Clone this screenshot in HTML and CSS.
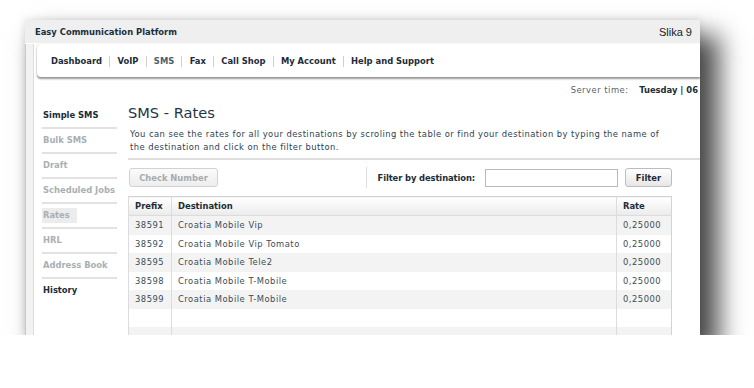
FILE: index.html
```html
<!DOCTYPE html>
<html lang="en">
  <head>
    <meta charset="UTF-8" />
    <meta name="viewport" content="width=device-width, initial-scale=1.0" />
    <title>Easy Communication Platform - SMS Rates</title>
    <link rel="stylesheet" href="styles.css">
  </head>
  <body>
    <div class="window">
      <div class="titlebar">
        <span class="app-name">Easy Communication Platform</span>
        <span class="caption">Slika 9</span>
      </div>

      <div class="shell">
        <div class="page">
          <!-- top menu -->
          <ul class="topnav">
            <li>Dashboard</li>
            <li>VoIP</li>
            <li class="current">SMS</li>
            <li>Fax</li>
            <li>Call Shop</li>
            <li>My Account</li>
            <li>Help and Support</li>
          </ul>

          <div class="server-time">
            <span class="label">Server time:</span>
            <strong>Tuesday | 06</strong>
          </div>

          <div class="content">
            <ul class="sidenav">
              <li class="on">Simple SMS</li>
              <li>Bulk SMS</li>
              <li>Draft</li>
              <li>Scheduled Jobs</li>
              <li><span class="selected">Rates</span></li>
              <li>HRL</li>
              <li>Address Book</li>
              <li class="on">History</li>
            </ul>

            <div class="main">
              <h1>SMS - Rates</h1>
              <p class="intro">
                You can see the rates for all your destinations by scroling the table or find your destination by typing the name of
                the destination and click on the filter button.
              </p>

              <div class="toolbar">
                <button class="button" disabled>Check Number</button>
                <div class="filter">
                  <label for="filter-destination">Filter by destination:</label>
                  <input type="text" id="filter-destination" />
                  <button class="button">Filter</button>
                </div>
              </div>

              <table class="rates">
                <thead>
                  <tr>
                    <th class="col-prefix">Prefix</th>
                    <th>Destination</th>
                    <th class="col-rate">Rate</th>
                  </tr>
                </thead>
                <tbody>
                  <tr><td>38591</td><td>Croatia Mobile Vip</td><td>0,25000</td></tr>
                  <tr><td>38592</td><td>Croatia Mobile Vip Tomato</td><td>0,25000</td></tr>
                  <tr><td>38595</td><td>Croatia Mobile Tele2</td><td>0,25000</td></tr>
                  <tr><td>38598</td><td>Croatia Mobile T-Mobile</td><td>0,25000</td></tr>
                  <tr><td>38599</td><td>Croatia Mobile T-Mobile</td><td>0,25000</td></tr>
                  <tr><td></td><td></td><td></td></tr>
                  <tr><td></td><td></td><td></td></tr>
                </tbody>
              </table>
            </div>
          </div>
        </div>
      </div>
    </div>
  </body>
</html>
```

FILE: styles.css
```css
body {
  margin: 0;
  background: #fff;
  font-family: "DejaVu Sans", Verdana, sans-serif;
  font-size: 8.4px;
  color: #2e404c;
}
.window {
  width: 675px;
  height: 315px;
  margin: 20px 0 0 25px;
  overflow: hidden;
  background: #fff;
  box-shadow: 0 0 8px rgba(0, 0, 0, 0.12), 16px 18px 24px 3px rgba(0, 0, 0, 0.7);
}
.titlebar {
  height: 23px;
  display: flex;
  align-items: center;
  justify-content: space-between;
  padding: 0 8px 0 10px;
  background: #efefef;
}
.app-name {
  font-weight: bold;
  color: #1b2f3d;
}
.caption {
  font-family: "Liberation Sans", Arial, sans-serif;
  font-size: 11px;
  color: #222;
  padding-top: 1px;
}
.shell {
  height: 292px;
  border-left: 1px solid #c9c9c9;
  background: #f2f2f2;
}
.page {
  height: 100%;
  margin-left: 7px;
  border-left: 1px solid #dcdcdc;
  background: #fff;
}
.topnav {
  list-style: none;
  margin: 1px 0 0 3px;
  padding: 2px 0 0 6.8px;
  height: 31px;
  display: flex;
  align-items: center;
  background: #fff;
  border-radius: 4px 0 0 4px;
  box-shadow: 0 2px 2px rgba(0, 0, 0, 0.4), 0 0 1px rgba(0, 0, 0, 0.25);
}
.topnav li {
  font-weight: bold;
  color: #1c2c38;
  padding: 0 7.2px;
  line-height: 11px;
}
.topnav li + li {
  border-left: 1px solid #cfcfcf;
}
.topnav li.current {
  color: #4f5f6a;
}
.server-time {
  margin-top: 7px;
  height: 12px;
  line-height: 12px;
  text-align: right;
  white-space: nowrap;
  padding-right: 2px;
}
.server-time .label {
  color: #56646c;
  letter-spacing: 0.5px;
  margin-right: 8px;
}
.server-time strong {
  color: #1c2c38;
}
.content {
  display: flex;
  margin-top: 7px;
}
.sidenav {
  list-style: none;
  margin: 0 0 0 8px;
  padding: 1px 0 0;
  width: 75px;
  flex-shrink: 0;
}
.sidenav li {
  height: 23px;
  line-height: 23px;
  border-bottom: 2px solid #e2e2e2;
  font-weight: bold;
  color: #a9b0b4;
  padding-left: 1px;
}
.sidenav li.on {
  color: #1c2c38;
}
.sidenav li:last-child {
  border-bottom: 0;
}
.sidenav .selected {
  display: inline-block;
  width: 34px;
  margin-left: -1px;
  padding-left: 1px;
  line-height: 15px;
  background: #ececec;
}
.main {
  flex: 1;
  margin-left: 11px;
}
.main h1 {
  margin: 0;
  font-size: 14.6px;
  font-weight: normal;
  line-height: 20px;
  color: #1e3444;
}
.intro {
  margin: 5px 0 0;
  padding: 0 30px 4px 2px;
  line-height: 13px;
  letter-spacing: 0.45px;
  color: #2c4252;
  border-bottom: 2px solid #dedede;
}
.toolbar {
  width: 544px;
  margin-top: 7px;
  display: flex;
  align-items: center;
}
.filter {
  margin-left: auto;
  display: flex;
  align-items: center;
  height: 21px;
  padding-left: 11px;
  border-left: 1px solid #dddddd;
}
.filter label {
  font-weight: bold;
  color: #1c2c38;
  white-space: nowrap;
  letter-spacing: -0.1px;
}
.filter input {
  width: 133px;
  height: 18px;
  box-sizing: border-box;
  margin: 0 0 0 10px;
  border: 1px solid #b9b9b9;
  padding: 0 3px;
}
.filter .button {
  margin-left: 7px;
  width: 47px;
  color: #1c2c38;
}
.button {
  height: 19px;
  padding: 0 8px;
  font-family: inherit;
  font-size: 8.4px;
  font-weight: bold;
  border: 1px solid #bdbdbd;
  border-radius: 3px;
  background: linear-gradient(#ffffff, #e6e6e6);
  cursor: pointer;
}
.button:disabled {
  width: 89px;
  margin-left: 1px;
  color: #a8acae;
  border-color: #d2d2d2;
  background: linear-gradient(#fbfbfb, #ededed);
}
.rates {
  width: 544px;
  margin-top: 8px;
  border-collapse: collapse;
  border: 1px solid #d3d3d3;
}
.rates th,
.rates td {
  height: 18.5px;
  padding: 0 5px 0 6px;
  text-align: left;
  border-left: 1px solid #dcdcdc;
}
.rates th {
  height: 18px;
  color: #1c2c38;
  background: linear-gradient(#ffffff, #ebebeb);
  border-bottom: 1px solid #dcdcdc;
}
.rates td {
  color: #3c4c56;
  letter-spacing: 0.5px;
}
.rates .col-prefix {
  width: 31px;
}
.rates .col-rate {
  width: 43px;
}
.rates tbody tr:nth-child(odd) {
  background: #f3f3f3;
}
```
